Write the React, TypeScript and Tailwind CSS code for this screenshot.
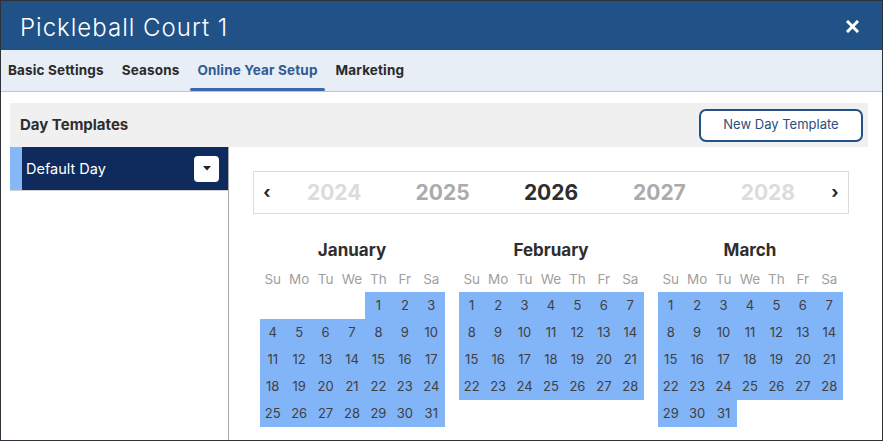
import React from "react";

const tabs = ["Basic Settings", "Seasons", "Online Year Setup", "Marketing"];
const weekdays = ["Su", "Mo", "Tu", "We", "Th", "Fr", "Sa"];

// 2026: first weekday of month (0 = Sunday) and number of days
const months = [
  { name: "January", start: 4, days: 31 },
  { name: "February", start: 0, days: 28 },
  { name: "March", start: 0, days: 31 },
];

const years = [
  { y: "2024", cls: "text-[#dcdcdc]" },
  { y: "2025", cls: "text-[#ababab]" },
  { y: "2026", cls: "text-[#2e2e2e]" },
  { y: "2027", cls: "text-[#ababab]" },
  { y: "2028", cls: "text-[#dcdcdc]" },
];

function Month({ name, start, days }: { name: string; start: number; days: number }) {
  const cells: (number | null)[] = [];
  for (let i = 0; i < start; i++) cells.push(null);
  for (let d = 1; d <= days; d++) cells.push(d);

  return (
    <div className="w-[185px] flex flex-col">
      <div className="h-[24px] mt-[1px] flex items-center justify-center text-[17px] font-bold text-[#2e2e2e]">
        {name}
      </div>
      <div className="mt-[4px] h-[24px] grid grid-cols-7 text-[13.5px] text-[#a0a0a0]">
        {weekdays.map((w) => (
          <div key={w} className="flex items-center justify-center">
            {w}
          </div>
        ))}
      </div>
      <div className="mt-[1px] grid grid-cols-7">
        {cells.map((d, i) => (
          <div
            key={i}
            className={`h-[27px] flex items-center justify-center text-[13px] text-[#404040] ${
              d ? "bg-[#82b4f8]" : ""
            }`}
          >
            {d}
          </div>
        ))}
      </div>
    </div>
  );
}

export default function App() {
  return (
    <div className="w-[883px] h-[441px] border border-[#2c3238] bg-white flex flex-col overflow-hidden font-['Inter',sans-serif]">
      {/* Header */}
      <div className="h-[49px] shrink-0 bg-[#215287] flex items-center justify-between pl-[19px] pr-[23px] pt-[5px]">
        <div className="text-white text-[24px] font-light tracking-[1px]">Pickleball Court 1</div>
        <svg width="13" height="13" viewBox="0 0 13 13" className="-mt-[3px]">
          <path d="M2 2 L11 11 M11 2 L2 11" stroke="white" strokeWidth="3" strokeLinecap="square" />
        </svg>
      </div>

      {/* Tabs */}
      <div className="h-[42px] shrink-0 bg-[#e8eef5] border-b border-[#c4c4c4] flex items-stretch gap-[4px]">
        {tabs.map((t) => {
          const active = t === "Online Year Setup";
          return (
            <div
              key={t}
              className={`relative px-[7px] flex items-center text-[13.5px] font-bold tracking-[0.15px] ${
                active ? "text-[#2f5b94]" : "text-[#2a2a2a]"
              }`}
            >
              {t}
              {active && (
                <div className="absolute left-0 right-0 bottom-0 h-[3px] rounded-full bg-[#3a68ad]" />
              )}
            </div>
          );
        })}
      </div>

      {/* Content */}
      <div className="flex-1 min-h-0 flex flex-col pl-[9px] pr-[14px] pt-[11px]">
        <div className="h-[44px] shrink-0 bg-[#f0f0f0] flex items-center justify-between pl-[10px] pr-[5px]">
          <div className="text-[15px] font-bold text-[#2e2e2e]">Day Templates</div>
          <button className="w-[164px] h-[33px] rounded-[7px] border-2 border-[#215287] bg-white text-[13px] text-[#2b4f7c]">
            New Day Template
          </button>
        </div>

        <div className="flex-1 min-h-0 flex">
          {/* Left list */}
          <div className="w-[219px] shrink-0 border-r border-[#a8a8a8]">
            <div className="h-[44px] flex items-stretch bg-[#0f2a5c] border-b border-[#d2d2d2]">
              <div className="w-[12px] bg-[#85b8f6]" />
              <div className="flex-1 flex items-center justify-between pl-[4px] pr-[9px]">
                <span className="text-white text-[14.5px]">Default Day</span>
                <div className="w-[25px] h-[26px] rounded-[4px] bg-white flex items-center justify-center">
                  <svg width="8" height="5" viewBox="0 0 8 5">
                    <path d="M0 0 H8 L4 4.5 Z" fill="#222" />
                  </svg>
                </div>
              </div>
            </div>
          </div>

          {/* Calendar */}
          <div className="flex-1 flex flex-col pl-[24px] pr-[19px] pt-[24px]">
            <div className="h-[43px] border border-[#dcdcdc] flex items-center">
              <div className="w-[26px] text-center text-[17px] font-bold text-[#222]">‹</div>
              {years.map((y) => (
                <div key={y.y} className={`flex-1 text-center text-[21px] font-bold ${y.cls}`}>
                  {y.y}
                </div>
              ))}
              <div className="w-[26px] text-center text-[17px] font-bold text-[#222]">›</div>
            </div>

            <div className="mt-[24px] flex justify-center gap-[14px]">
              {months.map((m) => (
                <Month key={m.name} {...m} />
              ))}
            </div>
          </div>
        </div>
      </div>
    </div>
  );
}
